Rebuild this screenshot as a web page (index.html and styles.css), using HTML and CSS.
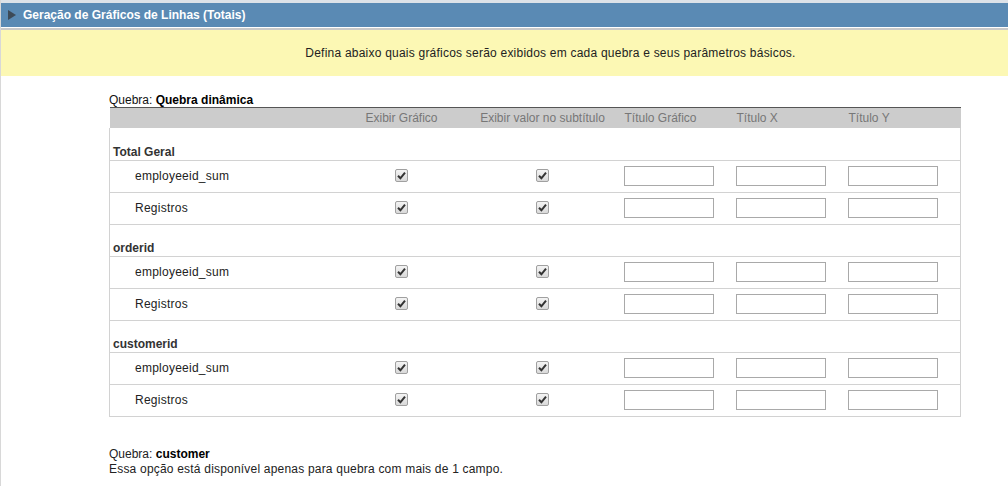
FILE: index.html
```html
<!DOCTYPE html>
<html lang="pt">
<head>
<meta charset="utf-8">
<link rel="stylesheet" href="styles.css">
</head>
<body>
<div class="page">
  <div class="topstrip"></div>
  <div class="titlebar"><span class="tri"></span><span class="title">Geração de Gráficos de Linhas (Totais)</span></div>
  <div class="sep"></div>
  <div class="notice">Defina abaixo quais gráficos serão exibidos em cada quebra e seus parâmetros básicos.</div>
  <div class="content">
    <div class="caption">Quebra: <b>Quebra dinâmica</b></div>
    <table class="grid">
      <colgroup>
        <col class="c1"><col class="c2"><col class="c3"><col class="c4"><col class="c5"><col class="c6">
      </colgroup>
      <thead>
        <tr>
          <th></th>
          <th class="center">Exibir Gráfico</th>
          <th class="center">Exibir valor no subtítulo</th>
          <th>Título Gráfico</th>
          <th>Título X</th>
          <th>Título Y</th>
        </tr>
      </thead>
      <tbody>
        <tr class="group"><td colspan="6">Total Geral</td></tr>
        <tr class="item">
          <td class="label">employeeid_sum</td>
          <td class="center"><span class="cb"><svg viewBox="0 0 13 13" width="13" height="13"><path d="M3 6.8 L5.4 9.3 L10 3.6" fill="none" stroke="#333" stroke-width="2"/></svg></span></td>
          <td class="center"><span class="cb"><svg viewBox="0 0 13 13" width="13" height="13"><path d="M3 6.8 L5.4 9.3 L10 3.6" fill="none" stroke="#333" stroke-width="2"/></svg></span></td>
          <td><input class="txt" type="text"></td>
          <td><input class="txt" type="text"></td>
          <td><input class="txt" type="text"></td>
        </tr>
        <tr class="item">
          <td class="label">Registros</td>
          <td class="center"><span class="cb"><svg viewBox="0 0 13 13" width="13" height="13"><path d="M3 6.8 L5.4 9.3 L10 3.6" fill="none" stroke="#333" stroke-width="2"/></svg></span></td>
          <td class="center"><span class="cb"><svg viewBox="0 0 13 13" width="13" height="13"><path d="M3 6.8 L5.4 9.3 L10 3.6" fill="none" stroke="#333" stroke-width="2"/></svg></span></td>
          <td><input class="txt" type="text"></td>
          <td><input class="txt" type="text"></td>
          <td><input class="txt" type="text"></td>
        </tr>
        <tr class="group"><td colspan="6">orderid</td></tr>
        <tr class="item">
          <td class="label">employeeid_sum</td>
          <td class="center"><span class="cb"><svg viewBox="0 0 13 13" width="13" height="13"><path d="M3 6.8 L5.4 9.3 L10 3.6" fill="none" stroke="#333" stroke-width="2"/></svg></span></td>
          <td class="center"><span class="cb"><svg viewBox="0 0 13 13" width="13" height="13"><path d="M3 6.8 L5.4 9.3 L10 3.6" fill="none" stroke="#333" stroke-width="2"/></svg></span></td>
          <td><input class="txt" type="text"></td>
          <td><input class="txt" type="text"></td>
          <td><input class="txt" type="text"></td>
        </tr>
        <tr class="item">
          <td class="label">Registros</td>
          <td class="center"><span class="cb"><svg viewBox="0 0 13 13" width="13" height="13"><path d="M3 6.8 L5.4 9.3 L10 3.6" fill="none" stroke="#333" stroke-width="2"/></svg></span></td>
          <td class="center"><span class="cb"><svg viewBox="0 0 13 13" width="13" height="13"><path d="M3 6.8 L5.4 9.3 L10 3.6" fill="none" stroke="#333" stroke-width="2"/></svg></span></td>
          <td><input class="txt" type="text"></td>
          <td><input class="txt" type="text"></td>
          <td><input class="txt" type="text"></td>
        </tr>
        <tr class="group"><td colspan="6">customerid</td></tr>
        <tr class="item">
          <td class="label">employeeid_sum</td>
          <td class="center"><span class="cb"><svg viewBox="0 0 13 13" width="13" height="13"><path d="M3 6.8 L5.4 9.3 L10 3.6" fill="none" stroke="#333" stroke-width="2"/></svg></span></td>
          <td class="center"><span class="cb"><svg viewBox="0 0 13 13" width="13" height="13"><path d="M3 6.8 L5.4 9.3 L10 3.6" fill="none" stroke="#333" stroke-width="2"/></svg></span></td>
          <td><input class="txt" type="text"></td>
          <td><input class="txt" type="text"></td>
          <td><input class="txt" type="text"></td>
        </tr>
        <tr class="item">
          <td class="label">Registros</td>
          <td class="center"><span class="cb"><svg viewBox="0 0 13 13" width="13" height="13"><path d="M3 6.8 L5.4 9.3 L10 3.6" fill="none" stroke="#333" stroke-width="2"/></svg></span></td>
          <td class="center"><span class="cb"><svg viewBox="0 0 13 13" width="13" height="13"><path d="M3 6.8 L5.4 9.3 L10 3.6" fill="none" stroke="#333" stroke-width="2"/></svg></span></td>
          <td><input class="txt" type="text"></td>
          <td><input class="txt" type="text"></td>
          <td><input class="txt" type="text"></td>
        </tr>
      </tbody>
    </table>
    <div class="footer">
      <div>Quebra: <b>customer</b></div>
      <div class="wide">Essa opção está disponível apenas para quebra com mais de 1 campo.</div>
    </div>
  </div>
</div>
</body>
</html>
```

FILE: styles.css
```css
html, body {
  margin: 0;
  padding: 0;
  background: #ffffff;
}
body {
  font-family: Arial, "Liberation Sans", sans-serif;
  font-size: 12px;
  color: #222;
}
.page {
  width: 1008px;
  height: 486px;
  overflow: hidden;
  border-left: 1px solid #d8d8d8;
  box-sizing: border-box;
}
.topstrip {
  height: 3px;
  background: #dde2e8;
}
.titlebar {
  height: 24px;
  background: #5a8ab4;
  display: flex;
  align-items: center;
  color: #ffffff;
  font-weight: bold;
  font-size: 12px;
}
.tri {
  width: 0;
  height: 0;
  border-top: 5px solid transparent;
  border-bottom: 5px solid transparent;
  border-left: 8px solid #3d4a57;
  margin-left: 7px;
  margin-right: 7px;
}
.sep {
  height: 1px;
  border-bottom: 2px solid #c9c9c9;
  background: #ffffff;
}
.notice {
  height: 46px;
  background: #fcf8b4;
  display: flex;
  align-items: center;
  justify-content: center;
  padding-left: 92px;
  color: #222;
  letter-spacing: 0.22px;
}
.content {
  padding-left: 108px;
}
.caption {
  margin-top: 17px;
  height: 14px;
  line-height: 15px;
  color: #111;
}
.caption b, .footer b {
  color: #000;
}
.grid {
  border-collapse: collapse;
  width: 851px;
  table-layout: fixed;
}
.c1 { width: 229px; }
.c2 { width: 126px; }
.c3 { width: 156px; }
.c4 { width: 112px; }
.c5 { width: 112px; }
.c6 { width: 116px; }
.grid thead th {
  background: #cccccc;
  color: #777;
  font-weight: normal;
  text-align: left;
  height: 20px;
  padding: 0 0 0 4px;
  border-top: 1px solid #555;
  white-space: nowrap;
}
.grid thead th.center {
  text-align: center;
  padding: 0;
}
.grid tbody tr {
  height: 32px;
}
.grid tbody td {
  border-bottom: 1px solid #d2d2d2;
  padding: 0 0 0 3px;
}
.grid tbody td:first-child {
  border-left: 1px solid #d2d2d2;
}
.grid tbody td:last-child {
  border-right: 1px solid #d2d2d2;
}
.grid tbody tr.group td {
  font-weight: bold;
  color: #333;
  vertical-align: bottom;
  padding: 0 0 1px 3px;
  border-right: 1px solid #d2d2d2;
}
.grid tbody td.label {
  padding-left: 25px;
  color: #222;
  letter-spacing: 0.25px;
}
.grid tbody td.center {
  text-align: center;
  padding: 0;
}
.cb {
  display: inline-block;
  width: 11px;
  height: 11px;
  border: 1px solid #a0a0a0;
  border-radius: 2px;
  background: linear-gradient(#f4f4f4, #d9d9d9);
  vertical-align: middle;
  position: relative;
  top: -1px;
}
.cb svg {
  position: absolute;
  left: -1px;
  top: -1px;
}
.txt {
  width: 90px;
  height: 20px;
  box-sizing: border-box;
  border: 1px solid #a9a9a9;
  margin: 0;
  padding: 0;
  vertical-align: middle;
  background: #fff;
}
.footer {
  margin-top: 30px;
  line-height: 15px;
  color: #222;
}
.footer .wide {
  letter-spacing: 0.2px;
}
```
